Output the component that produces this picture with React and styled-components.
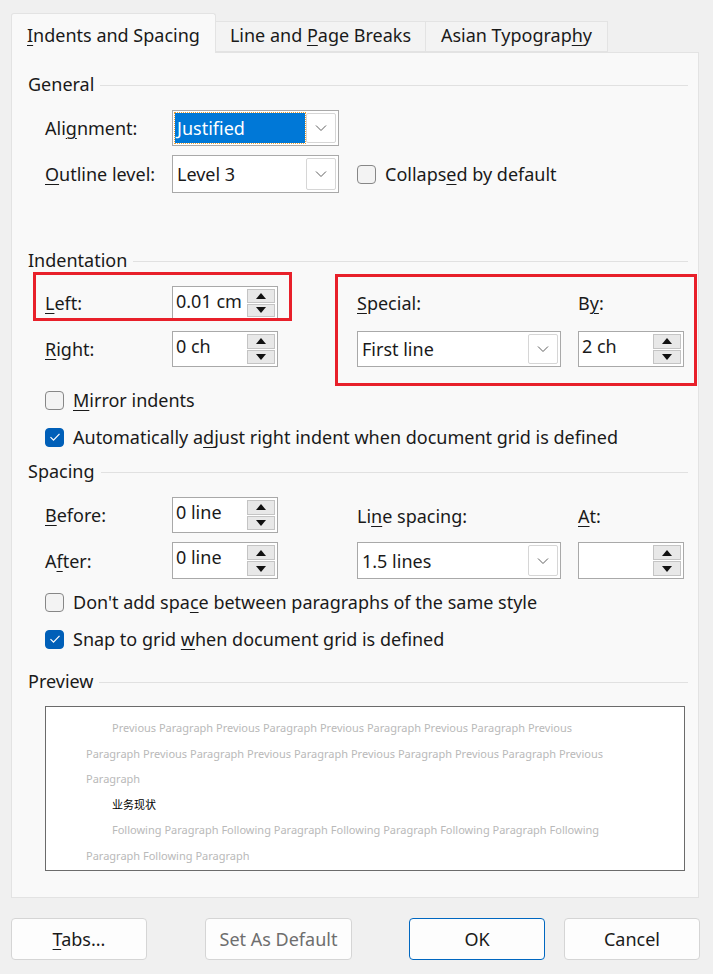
import styled, { createGlobalStyle } from "styled-components";

const Global = createGlobalStyle`
	html, body {
		margin: 0;
		padding: 0;
		background: #f0f0f0;
	}
	body {
		font-family: "Noto Sans", "Open Sans", "Liberation Sans", sans-serif;
		font-size: 18px;
		color: #1a1a1a;
	}
`;

function Chevron() {
	return (
		<svg width="12" height="8" viewBox="0 0 12 8">
			<path d="M1 1.5 L6 6.5 L11 1.5" fill="none" stroke="#5f5f5f" strokeWidth="1" />
		</svg>
	);
}

function Check() {
	return (
		<svg width="12" height="10" viewBox="0 0 12 10">
			<path d="M1.5 5.2 L4.5 8.2 L10.5 1.8" fill="none" stroke="#fff" strokeWidth="1.2" />
		</svg>
	);
}

function Select({ value, selected }) {
	return (
		<SelectBox>
			<SelectValue $selected={selected}>{value}</SelectValue>
			<DropButton>
				<Chevron />
			</DropButton>
		</SelectBox>
	);
}

function Spin({ value }) {
	return (
		<SpinBox>
			<SpinValue>{value}</SpinValue>
			<SpinButtons>
				<SpinButton>
					<Tri $up />
				</SpinButton>
				<SpinButton>
					<Tri />
				</SpinButton>
			</SpinButtons>
		</SpinBox>
	);
}

function CheckRow({ checked, children }) {
	return (
		<CheckLine>
			<CheckMark $checked={checked}>{checked && <Check />}</CheckMark>
			<span>{children}</span>
		</CheckLine>
	);
}

const previewLines = [
	{ text: "Previous Paragraph Previous Paragraph Previous Paragraph Previous Paragraph Previous", indent: true },
	{ text: "Paragraph Previous Paragraph Previous Paragraph Previous Paragraph Previous Paragraph Previous" },
	{ text: "Paragraph" },
	{ text: "业务现状", indent: true, main: true },
	{ text: "Following Paragraph Following Paragraph Following Paragraph Following Paragraph Following", indent: true },
	{ text: "Paragraph Following Paragraph" },
];

export default function App() {
	return (
		<Page>
			<Global />
			<TabBar>
				<Tab $active>
					<span>
						<u>I</u>ndents and Spacing
					</span>
				</Tab>
				<Tab $w={210}>
					<span>
						Line and <u>P</u>age Breaks
					</span>
				</Tab>
				<Tab $w={182}>
					<span>
						Asian Typograp<u>h</u>y
					</span>
				</Tab>
			</TabBar>
			<Panel>
				<Header $top={19}>General</Header>
				<GeneralGrid>
					<Label>
						Ali<u>g</u>nment:
					</Label>
					<Select value="Justified" selected />
					<span />
					<Label>
						<u>O</u>utline level:
					</Label>
					<Select value="Level 3" />
					<CheckCell>
						<CheckRow>
							Collaps<u>e</u>d by default
						</CheckRow>
					</CheckCell>
				</GeneralGrid>

				<Header $top={55}>Indentation</Header>
				<FieldGrid $rows="34px 36px" $gap={11}>
					<Label>
						<u>L</u>eft:
					</Label>
					<Spin value="0.01 cm" />
					<span />
					<Label>
						<u>S</u>pecial:
					</Label>
					<span />
					<Label>
						B<u>y</u>:
					</Label>
					<Label>
						<u>R</u>ight:
					</Label>
					<Spin value="0 ch" />
					<span />
					<Select value="First line" />
					<span />
					<Spin value="2 ch" />
					<Marker $x={-12} $y={-14} $w={259} $h={49} />
					<Marker $x={290} $y={-12} $w={362} $h={112} />
				</FieldGrid>
				<CheckList $top={21}>
					<CheckRow>
						<u>M</u>irror indents
					</CheckRow>
					<CheckRow checked>
						Automatically a<u>d</u>just right indent when document grid is defined
					</CheckRow>
				</CheckList>

				<Header $top={10}>Spacing</Header>
				<FieldGrid $rows="36px 37px" $gap={9}>
					<Label>
						<u>B</u>efore:
					</Label>
					<Spin value="0 line" />
					<span />
					<Label $pad={2}>
						Li<u>n</u>e spacing:
					</Label>
					<span />
					<Label $pad={2}>
						<u>A</u>t:
					</Label>
					<Label>
						A<u>f</u>ter:
					</Label>
					<Spin value="0 line" />
					<span />
					<Select value="1.5 lines" />
					<span />
					<Spin value="" />
				</FieldGrid>
				<CheckList $top={11}>
					<CheckRow>
						Don't add spa<u>c</u>e between paragraphs of the same style
					</CheckRow>
					<CheckRow checked>
						Snap to grid <u>w</u>hen document grid is defined
					</CheckRow>
				</CheckList>

				<Header $top={18}>Preview</Header>
				<Preview>
					{previewLines.map((l, i) => (
						<PreviewLine key={i} $indent={l.indent} $main={l.main}>
							{l.text}
						</PreviewLine>
					))}
				</Preview>
			</Panel>
			<ButtonRow>
				<Button>
					<span>
						<u>T</u>abs...
					</span>
				</Button>
				<Button $w={147} $gap={58} $disabled>
					Set As Default
				</Button>
				<Button $gap={57} $primary>
					OK
				</Button>
				<Button $gap={19}>Cancel</Button>
			</ButtonRow>
		</Page>
	);
}

const Page = styled.div`
	width: 713px;
	height: 974px;
	padding-top: 13px;
	box-sizing: border-box;
	background: #f0f0f0;
	overflow: hidden;
	u {
		text-decoration-thickness: 1px;
		text-underline-offset: 3px;
	}
`;

const TabBar = styled.div`
	display: flex;
	align-items: flex-end;
	margin-left: 11px;
	height: 39px;
	position: relative;
	z-index: 1;
`;

const Tab = styled.div`
	box-sizing: border-box;
	width: ${(p) => (p.$active ? 205 : p.$w)}px;
	height: ${(p) => (p.$active ? 40 : 31)}px;
	margin-bottom: ${(p) => (p.$active ? -1 : 0)}px;
	padding-left: ${(p) => (p.$active ? 15 : 0)}px;
	padding-top: ${(p) => (p.$active ? 3 : 0)}px;
	padding-bottom: ${(p) => (p.$active ? 0 : 4)}px;
	display: flex;
	align-items: center;
	justify-content: ${(p) => (p.$active ? "flex-start" : "center")};
	background: ${(p) => (p.$active ? "#f9f9f9" : "#f3f3f3")};
	border: 1px solid #e3e3e3;
	border-bottom: ${(p) => (p.$active ? "none" : "1px solid #e3e3e3")};
	border-left: ${(p) => (p.$active ? "1px solid #e3e3e3" : "none")};
	border-radius: ${(p) => (p.$active ? "3px 3px 0 0" : "0")};
	color: #1a1a1a;
	white-space: nowrap;
`;

const Panel = styled.div`
	margin-left: 11px;
	width: 688px;
	height: 846px;
	box-sizing: border-box;
	background: #f9f9f9;
	border: 1px solid #e3e3e3;
	padding: 0 10px 0 16px;
	display: flex;
	flex-direction: column;
`;

const Header = styled.div`
	margin-top: ${(p) => p.$top}px;
	height: 24px;
	line-height: 24px;
	display: flex;
	align-items: center;
	gap: 6px;
	&::after {
		content: "";
		flex: 1;
		height: 1px;
		background: #e1e1e1;
		margin-top: 2px;
	}
`;

const GeneralGrid = styled.div`
	margin-top: 14px;
	padding-left: 17px;
	display: grid;
	grid-template-columns: 127px 167px auto;
	grid-template-rows: 36px 38px;
	row-gap: 9px;
	align-items: center;
`;

const FieldGrid = styled.div`
	position: relative;
	margin-top: 14px;
	padding-left: 17px;
	display: grid;
	grid-template-columns: 127px 106px 79px 204px 17px 106px;
	grid-template-rows: ${(p) => p.$rows};
	row-gap: ${(p) => p.$gap}px;
	align-items: center;
`;

const Label = styled.div`
	line-height: 24px;
	white-space: nowrap;
	padding-top: ${(p) => p.$pad || 0}px;
`;

const Marker = styled.div`
	position: absolute;
	left: ${(p) => p.$x + 17}px;
	top: ${(p) => p.$y}px;
	width: ${(p) => p.$w}px;
	height: ${(p) => p.$h}px;
	border: 3px solid #e8202a;
	box-sizing: border-box;
	pointer-events: none;
`;

const SelectBox = styled.div`
	height: 100%;
	box-sizing: border-box;
	border: 1px solid #a9a9a9;
	background: #fff;
	display: flex;
	align-items: stretch;
	padding: 2px;
`;

const SelectValue = styled.div`
	flex: 1;
	display: flex;
	align-items: center;
	padding-left: 2px;
	color: ${(p) => (p.$selected ? "#fff" : "#1a1a1a")};
	background: ${(p) => (p.$selected ? "#0078d7" : "transparent")};
	outline: ${(p) => (p.$selected ? "1px dotted #f0a030" : "none")};
	margin-right: 1px;
	white-space: nowrap;
`;

const DropButton = styled.div`
	width: 28px;
	border: 1px solid #d6d6d6;
	border-radius: 2px;
	display: flex;
	align-items: center;
	justify-content: center;
	background: #fff;
`;

const SpinBox = styled.div`
	height: 100%;
	box-sizing: border-box;
	border: 1px solid #a9a9a9;
	background: #fff;
	display: flex;
	padding: 2px;
`;

const SpinValue = styled.div`
	flex: 1;
	padding-left: 1px;
	line-height: 24px;
	white-space: nowrap;
`;

const SpinButtons = styled.div`
	width: 28px;
	display: flex;
	flex-direction: column;
	gap: 1px;
`;

const SpinButton = styled.div`
	flex: 1;
	background: #e8e8e8;
	border: 1px solid #c4c4c4;
	display: flex;
	align-items: center;
	justify-content: center;
`;

const Tri = styled.div`
	width: 0;
	height: 0;
	border-left: 5px solid transparent;
	border-right: 5px solid transparent;
	${(p) => (p.$up ? "border-bottom: 6px solid #111;" : "border-top: 6px solid #111;")}
`;

const CheckCell = styled.div`
	padding-left: 18px;
`;

const CheckList = styled.div`
	margin-top: ${(p) => p.$top}px;
	padding-left: 17px;
	display: flex;
	flex-direction: column;
	gap: 13px;
`;

const CheckLine = styled.div`
	display: flex;
	align-items: center;
	gap: 9px;
	height: 24px;
	white-space: nowrap;
`;

const CheckMark = styled.div`
	width: 19px;
	height: 19px;
	box-sizing: border-box;
	border-radius: 4px;
	border: 1px solid ${(p) => (p.$checked ? "#005fb8" : "#878787")};
	background: ${(p) => (p.$checked ? "#005fb8" : "#f3f3f3")};
	display: flex;
	align-items: center;
	justify-content: center;
`;

const Preview = styled.div`
	margin-top: 13px;
	margin-left: 17px;
	width: 640px;
	height: 165px;
	box-sizing: border-box;
	border: 1px solid #6b6b6b;
	background: #fff;
	padding: 8px 0 0 40px;
	font-size: 11px;
`;

const PreviewLine = styled.div`
	height: 25.5px;
	line-height: 25.5px;
	padding-left: ${(p) => (p.$indent ? 26 : 0)}px;
	color: ${(p) => (p.$main ? "#000" : "#b9b9b9")};
	font-family: ${(p) => (p.$main ? '"Noto Sans CJK SC", sans-serif' : "inherit")};
	white-space: nowrap;
`;

const ButtonRow = styled.div`
	display: flex;
	margin: 20px 0 0 11px;
`;

const Button = styled.div`
	width: ${(p) => p.$w || 136}px;
	height: 42px;
	margin-left: ${(p) => p.$gap || 0}px;
	box-sizing: border-box;
	border: 1px solid ${(p) => (p.$primary ? "#0067c0" : "#d5d5d5")};
	border-radius: 4px;
	background: #fdfdfd;
	display: flex;
	align-items: center;
	justify-content: center;
	color: ${(p) => (p.$disabled ? "#6e6e6e" : "#1a1a1a")};
`;
